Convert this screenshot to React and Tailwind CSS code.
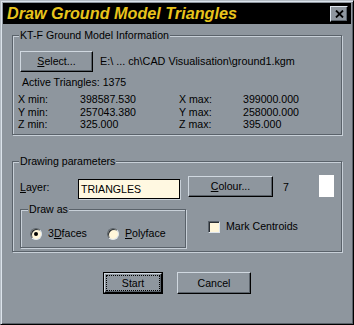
import React from "react";

const etched = "border border-[#5a626a] shadow-[inset_1px_1px_0_#c8d0d8,1px_1px_0_#c8d0d8]";

function Btn({ children, className = "", isDefault = false }) {
  if (isDefault) {
    return (
      <div className={`border border-black ${className}`}>
        <div className="h-full w-full border border-t-[#d0d8e0] border-l-[#d0d8e0] border-r-black border-b-black shadow-[inset_-1px_-1px_0_#5a626a] p-[1px]">
          <div className="h-full w-full border border-dotted border-black flex items-center justify-center">
            {children}
          </div>
        </div>
      </div>
    );
  }
  return (
    <div
      className={`border border-t-[#d0d8e0] border-l-[#d0d8e0] border-r-black border-b-black shadow-[inset_-1px_-1px_0_#5a626a] flex items-center justify-center ${className}`}
    >
      {children}
    </div>
  );
}

function Radio({ checked }) {
  return (
    <span className="w-[12px] h-[12px] rounded-full bg-[#fff6da] border border-t-[#5a626a] border-l-[#5a626a] border-r-[#dfe6ee] border-b-[#dfe6ee] shadow-[inset_1px_1px_0_#2a2e33] flex items-center justify-center">
      {checked && <span className="w-[4px] h-[4px] rounded-full bg-black" />}
    </span>
  );
}

export default function App() {
  const rows = [
    ["X min:", "398587.530", "X max:", "399000.000"],
    ["Y min:", "257043.380", "Y max:", "258000.000"],
    ["Z min:", "325.000", "Z max:", "395.000"],
  ];

  return (
    <div className="w-[354px] h-[325px] bg-[#8e969e] border border-t-[#b4bcc4] border-l-[#b4bcc4] border-r-black border-b-black shadow-[inset_1px_1px_0_#dce4ec,inset_-1px_-1px_0_#5a626a] p-[2px] text-[10.6px] leading-[13px] text-black font-['Liberation_Sans',Arial,sans-serif]">
      {/* title bar */}
      <div className="h-[21px] bg-black flex items-center justify-between pl-[4px] pr-[3px]">
        <span className="text-[16.2px] leading-[21px] font-bold italic text-[#e8c41c]">
          Draw Ground Model Triangles
        </span>
        <div className="w-[18px] h-[16px] bg-[#8e969e] border border-t-[#e0e8f0] border-l-[#e0e8f0] border-r-black border-b-black shadow-[inset_-1px_-1px_0_#5a626a] flex items-center justify-center">
          <svg width="9" height="8" viewBox="0 0 9 8">
            <path d="M1 0.5 L8 7.5 M8 0.5 L1 7.5" stroke="#000" strokeWidth="1.8" />
          </svg>
        </div>
      </div>

      <div className="px-[9px]">
        {/* ground model info */}
        <fieldset className={`mt-[5px] h-[106px] ${etched}`}>
          <legend className="ml-[6px] px-[1px] bg-[#8e969e] leading-[13px]">KT-F Ground Model Information</legend>
          <div className="pl-[7px]">
            <div className="flex items-center mt-[9px]">
              <Btn className="w-[73px] h-[21px]">
                <span><u>S</u>elect...</span>
              </Btn>
              <span className="ml-[7px] text-[10.8px]">E:\ ... ch\CAD Visualisation\ground1.kgm</span>
            </div>
            <div className="mt-[4px] ml-[2px]">Active Triangles: 1375</div>
            <div className="mt-[4px] -ml-[2px] grid grid-cols-[62px_99px_64px_auto] leading-[12.5px]">
              {rows.map((r) => r.map((c, i) => <span key={r[0] + i}>{c}</span>))}
            </div>
          </div>
        </fieldset>

        {/* drawing parameters */}
        <fieldset className={`mt-[20px] h-[97px] ${etched}`}>
          <legend className="ml-[6px] px-[1px] bg-[#8e969e] leading-[13px]">Drawing parameters</legend>
          <div className="pl-[7px]">
            <div className="flex items-start mt-[7px] h-[22px]">
              <span className="w-[58px] mt-[6px]"><u>L</u>ayer:</span>
              <div className="w-[102px] h-[20px] mt-[4px] bg-[#fff8e1] border border-black shadow-[1px_1px_0_#c8d0d8] px-[2px] flex items-center">
                TRIANGLES
              </div>
              <Btn className="ml-[8px] w-[85px] h-[21px] mt-[1px]">
                <span><u>C</u>olour...</span>
              </Btn>
              <span className="ml-[10px] w-[36px] mt-[6px]">7</span>
              <div className="w-[15px] h-[22px] bg-white" />
            </div>

            <div className="flex items-start mt-[6px]">
              <fieldset className={`w-[166px] h-[45px] ${etched}`}>
                <legend className="ml-[7px] px-[1px] bg-[#8e969e] leading-[13px]">Draw as</legend>
                <div className="flex items-center mt-[11px] pl-[9px]">
                  <div className="w-[77px] flex items-center gap-[6px]">
                    <Radio checked />
                    <span>3<u>D</u>faces</span>
                  </div>
                  <div className="flex items-center gap-[6px]">
                    <Radio />
                    <span><u>P</u>olyface</span>
                  </div>
                </div>
              </fieldset>
              <div className="ml-[22px] mt-[17px] flex items-center gap-[6px]">
                <span className="w-[12px] h-[12px] bg-[#fff6da] border border-t-[#5a626a] border-l-[#5a626a] border-r-[#dfe6ee] border-b-[#dfe6ee] shadow-[inset_1px_1px_0_#2a2e33]" />
                <span>Mark Centroids</span>
              </div>
            </div>
          </div>
        </fieldset>

        {/* buttons */}
        <div className="mt-[20px] flex justify-center gap-[14px]">
          <Btn isDefault className="w-[60px] h-[22px]">Start</Btn>
          <Btn className="w-[74px] h-[22px]">Cancel</Btn>
        </div>
      </div>
    </div>
  );
}
